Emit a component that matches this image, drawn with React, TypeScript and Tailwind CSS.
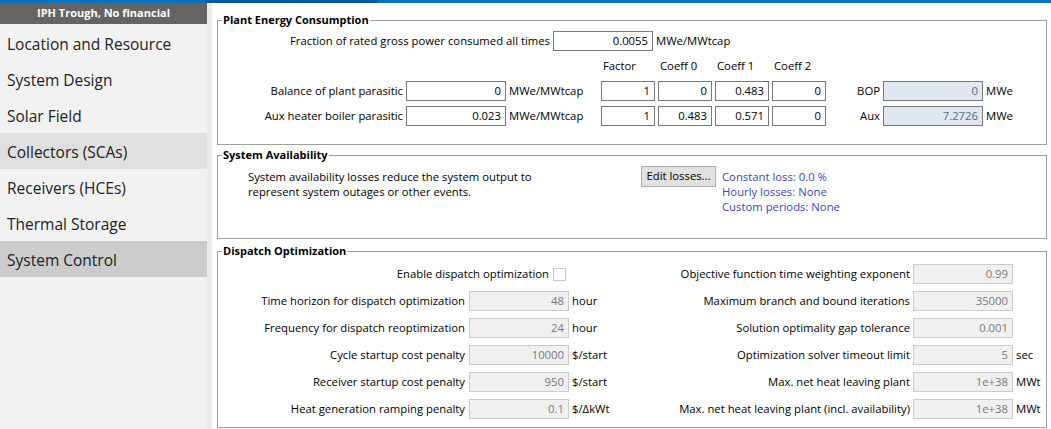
import React from 'react';

const font = "font-['Open_Sans','Noto_Sans',sans-serif]";

type BoxKind = 'edit' | 'calc' | 'off';

function Field({ value, kind = 'edit', w = 'w-[100px]' }: { value: string; kind?: BoxKind; w?: string }) {
  const styles: Record<BoxKind, string> = {
    edit: 'bg-white border-[#7a7a7a] text-black',
    calc: 'bg-[#dfe7f1] border-[#7a7a7a] text-[#5b6b82]',
    off: 'bg-[#f0f0f0] border-[#cccccc] text-[#7a7a7a]',
  };
  return (
    <div className={`${w} h-[20px] shrink-0 border px-[4px] flex items-center justify-end leading-none ${styles[kind]}`}>
      {value}
    </div>
  );
}

function Row({ label, labelW, value, unit, kind = 'off', gap = 'ml-[4px]' }: {
  label: string; labelW: string; value: string; unit?: string; kind?: BoxKind; gap?: string;
}) {
  return (
    <div className="flex items-center h-[20px]">
      <div className={`${labelW} text-right whitespace-nowrap shrink-0`}>{label}</div>
      <div className={gap}>
        <Field value={value} kind={kind} />
      </div>
      {unit && <div className="ml-[3px] whitespace-nowrap">{unit}</div>}
    </div>
  );
}

function Group({ title, h, children }: { title: string; h: string; children: React.ReactNode }) {
  return (
    <fieldset className={`border border-[#a0a0a0] min-w-0 ${h}`}>
      <legend className="ml-[4px] px-[1px] font-bold text-[11px] leading-[16px]">{title}</legend>
      {children}
    </fieldset>
  );
}

const navItems = [
  { name: 'Location and Resource', bg: '' },
  { name: 'System Design', bg: '' },
  { name: 'Solar Field', bg: '' },
  { name: 'Collectors (SCAs)', bg: 'bg-[#e0e0e0]' },
  { name: 'Receivers (HCEs)', bg: '' },
  { name: 'Thermal Storage', bg: '' },
  { name: 'System Control', bg: 'bg-[#cccccc]' },
];

export default function App() {
  return (
    <div className={`w-[1051px] h-[429px] overflow-hidden bg-white text-[11.3px] text-black ${font}`}>
      {/* top tab strip */}
      <div className="h-[3px] bg-[#0072c6] flex">
        <div className="ml-[205px] w-[172px] bg-[#005a9e]" />
      </div>

      <div className="flex h-[426px]">
        {/* sidebar */}
        <div className="w-[207px] bg-[#f2f2f2] shrink-0">
          <div className="h-[21px] bg-[#646464] text-white font-bold text-[11px] flex items-center justify-center">
            IPH Trough, No financial
          </div>
          <div className="mt-[1px]">
            {navItems.map(item => (
              <div key={item.name} className={`h-[36px] flex items-center pl-[7px] pt-[4px] text-[15.5px] text-[#222222] ${item.bg}`}>
                {item.name}
              </div>
            ))}
          </div>
        </div>
        <div className="w-[5px] bg-[#ececec] shrink-0" />

        {/* main */}
        <div className="flex-1 pl-[5px] pr-[4px] pt-[9px]">
          <Group title="Plant Energy Consumption" h="h-[133px]">
            <div className="mt-[3px]">
              <Row label="Fraction of rated gross power consumed all times" labelW="w-[332px]" value="0.0055" unit="MWe/MWtcap" kind="edit" gap="ml-[3px]" />
            </div>

            <div className="mt-[7px] h-[16px] flex items-center gap-[3px] ml-[383px]">
              {['Factor', 'Coeff 0', 'Coeff 1', 'Coeff 2'].map(c => (
                <div key={c} className="w-[54px] pl-[2px]">{c}</div>
              ))}
            </div>

            {[
              { label: 'Balance of plant parasitic', v: '0', c: ['1', '0', '0.483', '0'], out: 'BOP', ov: '0' },
              { label: 'Aux heater boiler parasitic', v: '0.023', c: ['1', '0.483', '0.571', '0'], out: 'Aux', ov: '7.2726' },
            ].map((r, i) => (
              <div key={r.label} className={`flex items-center h-[20px] ${i === 0 ? 'mt-[7px]' : 'mt-[5px]'}`}>
                <div className="w-[185px] text-right whitespace-nowrap">{r.label}</div>
                <div className="ml-[3px]"><Field value={r.v} /></div>
                <div className="ml-[3px] w-[92px] whitespace-nowrap">MWe/MWtcap</div>
                <div className="flex gap-[3px]">
                  {r.c.map((c, j) => <Field key={j} value={c} w="w-[54px]" />)}
                </div>
                <div className="w-[54px] text-right">{r.out}</div>
                <div className="ml-[3px]"><Field value={r.ov} kind="calc" /></div>
                <div className="ml-[3px]">MWe</div>
              </div>
            ))}
          </Group>

          <div className="mt-[2px]">
            <Group title="System Availability" h="h-[92px]">
              <div className="flex items-start pt-[3px]">
                <div className="ml-[30px] w-[393px] mt-[3px] leading-[15px]">
                  System availability losses reduce the system output to<br />
                  represent system outages or other events.
                </div>
                <div className="w-[75px] h-[21px] bg-[#e1e1e1] border border-[#adadad] flex items-center justify-center">
                  Edit losses...
                </div>
                <div className="ml-[6px] mt-[3px] leading-[15px] text-[#3c46c8]">
                  <div>Constant loss: 0.0 %</div>
                  <div>Hourly losses: None</div>
                  <div>Custom periods: None</div>
                </div>
              </div>
            </Group>
          </div>

          <div className="mt-[4px]">
            <Group title="Dispatch Optimization" h="h-[185px]">
              <div className="flex mt-[5px]">
                <div className="w-[412px] flex flex-col gap-[7px]">
                  <div className="flex items-center h-[20px]">
                    <div className="w-[331px] text-right">Enable dispatch optimization</div>
                    <div className="ml-[4px] w-[13px] h-[13px] border border-[#c8c8c8] bg-white" />
                  </div>
                  <Row label="Time horizon for dispatch optimization" labelW="w-[247px]" value="48" unit="hour" />
                  <Row label="Frequency for dispatch reoptimization" labelW="w-[247px]" value="24" unit="hour" />
                  <Row label="Cycle startup cost penalty" labelW="w-[247px]" value="10000" unit="$/start" />
                  <Row label="Receiver startup cost penalty" labelW="w-[247px]" value="950" unit="$/start" />
                  <Row label="Heat generation ramping penalty" labelW="w-[247px]" value="0.1" unit="$/ΔkWt" />
                </div>
                <div className="flex flex-col gap-[7px]">
                  <Row label="Objective function time weighting exponent" labelW="w-[280px]" value="0.99" gap="ml-[3px]" />
                  <Row label="Maximum branch and bound iterations" labelW="w-[280px]" value="35000" gap="ml-[3px]" />
                  <Row label="Solution optimality gap tolerance" labelW="w-[280px]" value="0.001" gap="ml-[3px]" />
                  <Row label="Optimization solver timeout limit" labelW="w-[280px]" value="5" unit="sec" gap="ml-[3px]" />
                  <Row label="Max. net heat leaving plant" labelW="w-[280px]" value="1e+38" unit="MWt" gap="ml-[3px]" />
                  <Row label="Max. net heat leaving plant (incl. availability)" labelW="w-[280px]" value="1e+38" unit="MWt" gap="ml-[3px]" />
                </div>
              </div>
            </Group>
          </div>
        </div>
      </div>
    </div>
  );
}
